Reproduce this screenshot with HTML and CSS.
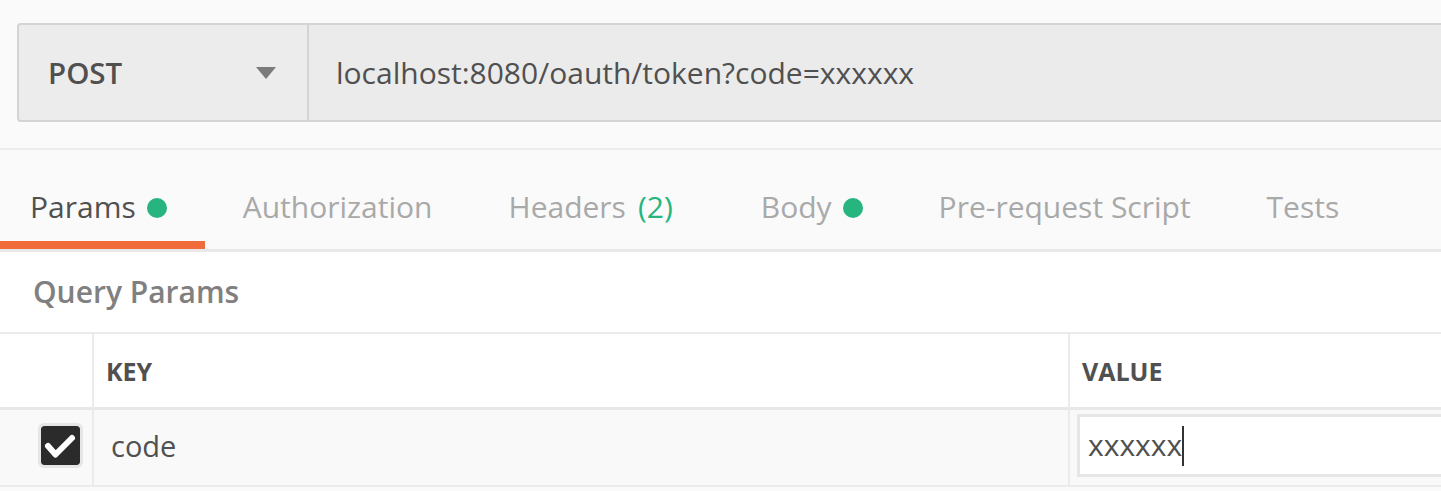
FILE: index.html
```html
<!DOCTYPE html>
<html>
<head>
<meta charset="utf-8">
<link rel="stylesheet" href="styles.css">
</head>
<body>
<div class="request-bar">
  <div class="url-group">
    <div class="method"><span class="method-name">POST</span><span class="caret"></span></div>
    <div class="url">localhost:8080/oauth/token?code=xxxxxx</div>
  </div>
</div>
<div class="tabs">
  <div class="tab active">Params<span class="dot"></span></div>
  <div class="tab">Authorization</div>
  <div class="tab tab-headers">Headers<span class="count">(2)</span></div>
  <div class="tab">Body<span class="dot"></span></div>
  <div class="tab">Pre-request Script</div>
  <div class="tab">Tests</div>
</div>
<div class="panel">
  <div class="panel-title">Query Params</div>
  <div class="table">
    <div class="cell head check-col"></div>
    <div class="cell head key-col">KEY</div>
    <div class="cell head value-col">VALUE</div>
    <div class="cell row check-col"><span class="checkbox"><svg width="39" height="39" viewBox="0 0 39 39"><path d="M7 20 L14.5 28.5 L31 12" fill="none" stroke="#fff" stroke-width="6" stroke-linecap="round" stroke-linejoin="round"/></svg></span></div>
    <div class="cell row key-col"><span class="key-text">code</span></div>
    <div class="cell row value-col"><div class="value-input">xxxxxx<span class="cursor"></span></div></div>
  </div>
</div>
</body>
</html>
```
FILE: styles.css
```css
html, body {
  margin: 0;
  padding: 0;
}
body {
  background: #fafafa;
  font-family: "Open Sans", "Liberation Sans", sans-serif;
  color: #505050;
  overflow: hidden;
  width: 1441px;
}
.request-bar {
  box-sizing: border-box;
  height: 150px;
  padding: 23px 0 0 17px;
  border-bottom: 2px solid #ececec;
}
.url-group {
  display: flex;
  height: 99px;
  box-sizing: border-box;
  border: 2px solid #d4d4d4;
  border-right: none;
  border-radius: 4px 0 0 4px;
  background: #ebebeb;
  margin-right: -20px;
}
.method {
  box-sizing: border-box;
  width: 290px;
  display: flex;
  align-items: center;
  justify-content: space-between;
  padding: 0 31px 0 29px;
  background: #ececec;
  border-right: 2px solid #d4d4d4;
  border-radius: 3px 0 0 3px;
}
.method-name {
  font-size: 29.5px;
  font-weight: 600;
  color: #505050;
}
.caret {
  width: 0;
  height: 0;
  border-left: 10px solid transparent;
  border-right: 10px solid transparent;
  border-top: 12px solid #7b7b7b;
}
.url {
  display: flex;
  align-items: center;
  padding-left: 27px;
  font-size: 30px;
  color: #505050;
}
.tabs {
  display: flex;
  height: 99px;
  border-bottom: 3px solid #e8e8e8;
}
.tab {
  box-sizing: border-box;
  display: flex;
  align-items: center;
  height: 99px;
  padding: 22px 38px 0;
  border-bottom: 8px solid transparent;
  font-size: 30px;
  color: #a9a9a9;
  white-space: nowrap;
}
.tab.active {
  padding-left: 30px;
  color: #505050;
  border-bottom-color: #f26b3a;
}
.dot {
  width: 20px;
  height: 20px;
  border-radius: 50%;
  background: #26b47f;
  margin-left: 11px;
  margin-top: 3px;
}
.count {
  color: #26b47f;
  margin-left: 12px;
  margin-right: 12px;
}
.panel {
  background: #ffffff;
}
.panel-title {
  box-sizing: border-box;
  height: 80px;
  padding: 19px 0 0 33px;
  font-size: 30px;
  font-weight: 600;
  color: #808080;
}
.table {
  display: grid;
  grid-template-columns: 92px 976px 1fr;
  border-top: 2px solid #ebebeb;
}
.cell {
  box-sizing: border-box;
  display: flex;
  align-items: center;
}
.cell.head {
  height: 76px;
  border-bottom: 3px solid #e8e8e8;
  font-size: 25px;
  font-weight: 700;
  color: #505050;
  padding-top: 0;
}
.cell.row {
  height: 77px;
  background: #f9f9f9;
  border-bottom: 2px solid #ebebeb;
}
.key-col, .value-col {
  border-left: 2px solid #ebebeb;
}
.head.key-col {
  padding-left: 12px;
}
.head.value-col {
  padding-left: 12px;
}
.row.check-col {
  padding-left: 38px;
  padding-bottom: 4px;
}
.checkbox {
  display: flex;
  width: 39px;
  height: 39px;
  background: #2b2b2b;
  border-radius: 6px;
  border: 3px solid #e6e6e6;
  background-clip: padding-box;
}
.key-text {
  padding-left: 17px;
  padding-bottom: 5px;
  font-size: 29px;
  color: #505050;
}
.row.value-col {
  padding-left: 7px;
  padding-top: 4px;
  padding-bottom: 8px;
  align-items: stretch;
}
.value-input {
  flex: 1;
  display: flex;
  align-items: center;
  box-sizing: border-box;
  background: #ffffff;
  border: 3px solid #e6e6e6;
  border-right: none;
  padding-left: 8px;
  padding-bottom: 3px;
  font-size: 30px;
  color: #505050;
}
.cursor {
  display: inline-block;
  width: 2px;
  height: 40px;
  background: #333333;
  margin-top: 3px;
}
```
